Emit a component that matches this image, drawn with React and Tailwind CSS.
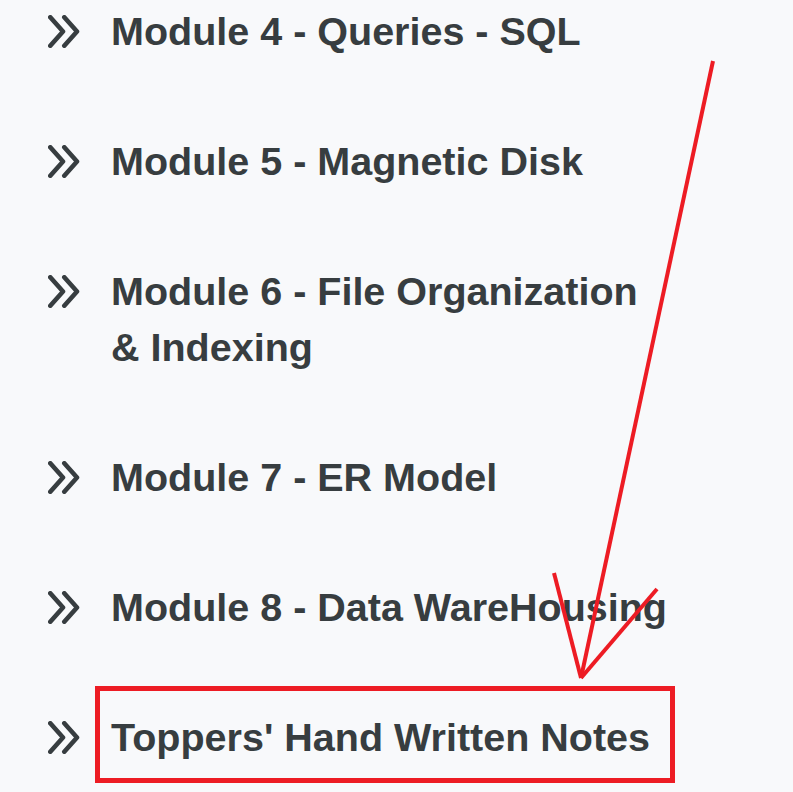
import React from "react";

const items = [
  "Module 4 - Queries - SQL",
  "Module 5 - Magnetic Disk",
  "Module 6 - File Organization & Indexing",
  "Module 7 - ER Model",
  "Module 8 - Data WareHousing",
  "Toppers' Hand Written Notes",
];

function Chevrons() {
  return (
    <svg width="33" height="33" viewBox="0 0 33 33" fill="none" stroke="#373d40" strokeWidth="4.6" strokeLinecap="round" strokeLinejoin="round">
      <polyline points="2.3,2.3 15,16.5 2.3,30.7" />
      <polyline points="16.3,2.3 29,16.5 16.3,30.7" />
    </svg>
  );
}

export default function App() {
  return (
    <div
      className="relative w-full min-h-[792px] overflow-hidden bg-[#f8f9fb]"
      style={{ fontFamily: '"Liberation Sans", Arial, Helvetica, sans-serif' }}
    >
      <ul className="flex flex-col gap-[74px] pl-[48px] pt-[3px]">
        {items.map((t) => (
          <li key={t} className="flex items-start">
            <div className="flex h-[56px] w-[33px] shrink-0 items-center">
              <Chevrons />
            </div>
            <span className="ml-[30px] w-[561px] text-[39.5px] font-bold leading-[56px] text-[#373d40]">
              {t}
            </span>
          </li>
        ))}
      </ul>
      <svg
        className="pointer-events-none absolute left-0 top-0"
        width="793"
        height="792"
        viewBox="0 0 793 792"
        fill="none"
        stroke="#ed1c24"
      >
        <rect x="97.5" y="688.5" width="575" height="92" strokeWidth="5" />
        <line x1="713" y1="61" x2="581" y2="678" strokeWidth="4" />
        <line x1="554" y1="573" x2="581" y2="678" strokeWidth="4" />
        <line x1="657" y1="589" x2="581" y2="678" strokeWidth="4" />
      </svg>
    </div>
  );
}
